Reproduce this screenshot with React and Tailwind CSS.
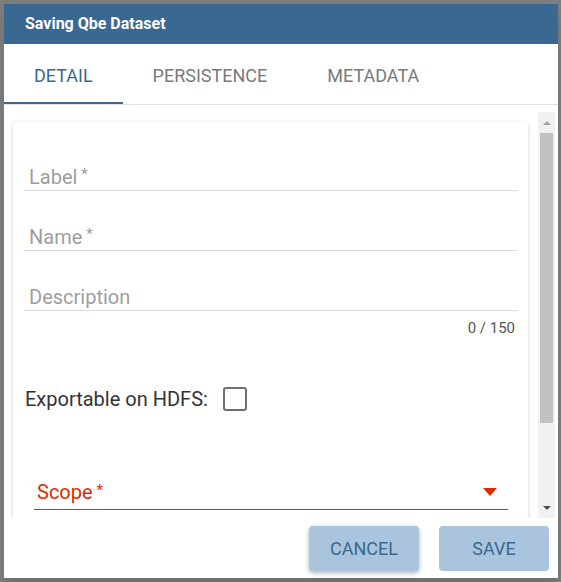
import { useState } from "react";

const tabs = ["DETAIL", "PERSISTENCE", "METADATA"];

function Field({ label, required }) {
  return (
    <div className="h-[60px] flex flex-col justify-end">
      <div className="flex items-center h-[30px] pl-[5px] text-[20px] text-[#9e9e9e] leading-none">
        {label}
        {required && <span className="ml-[4px] text-[15px] -mt-[5px]">*</span>}
      </div>
      <div className="h-[1px] bg-[#dcdcdc] mt-[-2px]" />
    </div>
  );
}

function Scrollbar() {
  return (
    <div className="w-[17px] flex flex-col bg-[#f1f1f1] mt-[7px]">
      <div className="h-[21px] flex items-center justify-center">
        <div className="w-0 h-0 border-l-[4px] border-r-[4px] border-b-[4px] border-l-transparent border-r-transparent border-b-[#a3a3a3]" />
      </div>
      <div className="mx-[2px] h-[290px] bg-[#c1c1c1]" />
      <div className="flex-1" />
      <div className="h-[21px] flex items-center justify-center">
        <div className="w-0 h-0 border-l-[4px] border-r-[4px] border-t-[4px] border-l-transparent border-r-transparent border-t-[#505050]" />
      </div>
    </div>
  );
}

export default function App() {
  const [active, setActive] = useState(0);

  return (
    <div className="w-[561px] h-[582px] bg-[#7d7d7d] pt-[4px] pl-[4px] font-['Roboto',sans-serif]">
      <div className="w-[554px] h-[574px] bg-white flex flex-col shadow-lg">
        {/* header */}
        <div className="h-[40px] bg-[#3b6890] flex items-center pl-[21px] text-white text-[16px] font-bold">
          Saving Qbe Dataset
        </div>

        {/* tabs */}
        <div className="h-[61px] flex border-b border-[#e2e2e2]">
          {tabs.map((t, i) => (
            <button
              key={t}
              onClick={() => setActive(i)}
              className={`relative px-[30px] pt-[2px] text-[18px] ${
                active === i ? "text-[#3b6890]" : "text-[#7a7a7a]"
              }`}
            >
              {t}
              {active === i && (
                <span className="absolute left-0 right-0 bottom-0 h-[2px] bg-[#3b6890]" />
              )}
            </button>
          ))}
        </div>

        {/* body */}
        <div className="flex-1 flex overflow-hidden pr-[3px]">
          <div className="flex-1 overflow-hidden pl-[9px] pr-[10px] pt-[17px]">
            <div className="rounded-[4px] bg-white shadow-[0_1px_4px_rgba(0,0,0,0.18)] pt-[9px] pl-[11px] pr-[10px] h-[420px]">
              <Field label="Label" required />
              <Field label="Name" required />
              <Field label="Description" />
              <div className="text-right text-[15px] text-[#555] pr-[3px] mt-[6px]">0 / 150</div>

              <div className="flex items-center mt-[44px] text-[20px] text-[#333]">
                <span className="ml-[1px]">Exportable on HDFS:</span>
                <span className="ml-[15px] w-[24px] h-[24px] border-2 border-[#6f6f6f] rounded-[3px]" />
              </div>

              <div className="mx-[10px] mt-[65px]">
                <div className="flex items-center justify-between h-[26px] pl-[3px]">
                  <span className="text-[20px] text-[#dd2c00]">
                    Scope<span className="ml-[4px] text-[15px] relative -top-[4px]">*</span>
                  </span>
                  <span className="mr-[11px] w-0 h-0 border-l-[7px] border-r-[7px] border-t-[8px] border-l-transparent border-r-transparent border-t-[#dd2c00]" />
                </div>
                <div className="h-[1px] bg-[#dd2c00] mt-[4px]" />
              </div>
            </div>
          </div>
          <Scrollbar />
        </div>

        {/* footer */}
        <div className="h-[60px] flex justify-end items-start pt-[8px] pr-[9px] gap-[20px]">
          <button className="w-[110px] h-[45px] rounded-[4px] bg-[#a9c4dc] text-[#3b6890] text-[18px] shadow-[0_2px_5px_rgba(0,0,0,0.3)]">
            CANCEL
          </button>
          <button className="w-[110px] h-[45px] rounded-[4px] bg-[#a9c4dc] text-[#3b6890] text-[18px]">
            SAVE
          </button>
        </div>
      </div>
    </div>
  );
}
